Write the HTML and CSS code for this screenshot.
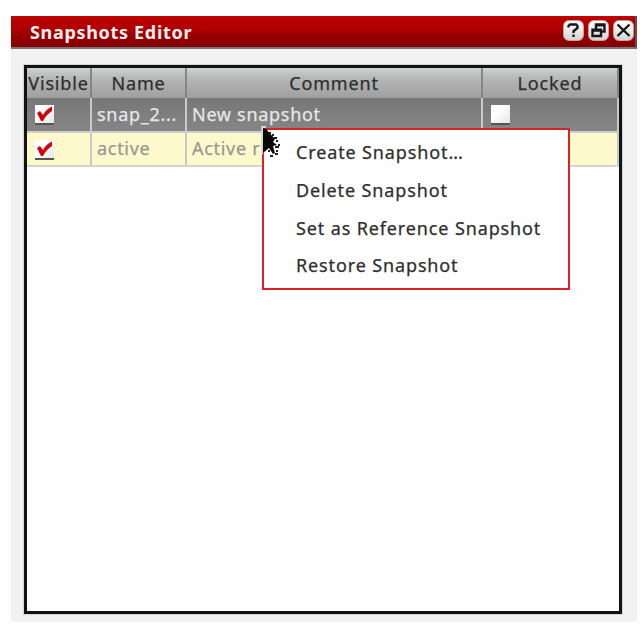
FILE: index.html
```html
<!DOCTYPE html>
<html lang="en">
<head>
<meta charset="utf-8">
<title>Snapshots Editor</title>
<link rel="stylesheet" href="styles.css">
</head>
<body>
<main class="panel">
  <header class="titlebar">
    <h1 class="title">Snapshots Editor</h1>
    <div class="buttons">
      <button class="tool" aria-label="Help"><svg viewBox="0 0 19 19"><path d="M4.5 6.5V5L6 3.5H12L13.5 5V7L9.5 10.2V12M9.5 13.5V16" /></svg></button>
      <button class="tool" aria-label="Restore"><svg viewBox="0 0 19 19"><path d="M7 8V3.5H15.5V10.5H13M7 4.3H15.5M3.5 8.8H12V15H3.5ZM3.5 9.6H12" /></svg></button>
      <button class="tool" aria-label="Close"><svg viewBox="0 0 19 19"><path d="M3.5 3.5L15.5 15M15.5 3.5L3.5 15" /></svg></button>
    </div>
  </header>
  <section class="frame">
    <div class="row head">
      <div class="cell">Visible</div>
      <div class="cell">Name</div>
      <div class="cell">Comment</div>
      <div class="cell">Locked</div>
    </div>
    <div class="row selected">
      <div class="cell check"><span class="box"><svg viewBox="0 0 18 18"><path d="M2 8L5 6L8 10Q11 4 17 1.5V6Q11 10 8 16H6Z"/></svg></span></div>
      <div class="cell">snap_2...</div>
      <div class="cell">New snapshot</div>
      <div class="cell check"><span class="box"></span></div>
    </div>
    <div class="row active">
      <div class="cell check"><span class="box"><svg viewBox="0 0 18 18"><path d="M2 8L5 6L8 10Q11 4 17 1.5V6Q11 10 8 16H6Z"/></svg></span></div>
      <div class="cell">active</div>
      <div class="cell">Active r</div>
      <div class="cell"></div>
    </div>
  </section>
</main>
<ul class="menu">
  <li>Create Snapshot<span class="dots">...</span></li>
  <li>Delete Snapshot</li>
  <li>Set as Reference Snapshot</li>
  <li>Restore Snapshot</li>
</ul>
<svg class="cursor" viewBox="0 0 22 36">
  <path class="edge" d="M1.2 1V29M1 2H5"/>
  <path d="M2 3L5 4L14 14L12 17L16 20L12 21L14 28L12 29L8 23L2 28Z"/>
  <path class="specks" d="M8 8h2M11 10h2M13 13h3M15 16h2M17 20h2M14 22h4M15 26h2M14 29h3M9 31h3M7 26h2"/>
</svg>
</body>
</html>
```

FILE: styles.css
```css
* { box-sizing: border-box; }
body {
  margin: 0;
  width: 640px;
  height: 640px;
  padding: 16px 3px 0 11px;
  overflow: hidden;
  background: #fefefe;
  font-family: "Noto Sans", sans-serif;
  font-size: 18px;
  letter-spacing: 0.7px;
  color: #2e2e2e;
  -webkit-text-stroke: 0.25px;
}
.panel {
  height: 606px;
  display: flex;
  flex-direction: column;
  background: #f3f2f3;
}
.titlebar {
  flex: none;
  height: 33px;
  display: flex;
  align-items: center;
  justify-content: space-between;
  padding: 0 1px 0 19px;
  background: linear-gradient(#c30606 0, #b60000 4px, #b00000 13px, #980000 19px, #850000 31px);
  border-right: 2px solid #6b4a4a;
  border-bottom: 2px solid #777;
}
.title {
  margin: 0;
  font-size: 18px;
  line-height: 30px;
  font-weight: 700;
  letter-spacing: 0.68px;
  color: #fdeeee;
  -webkit-text-stroke: 0;
}
.buttons { display: flex; gap: 4px; margin-top: -3px; }
.tool {
  width: 21px;
  height: 21px;
  padding: 0;
  border: 1px solid #c9a0a0;
  border-radius: 6px;
  background: linear-gradient(#fff, #d4d4d4);
}
.tool svg { display: block; width: 19px; height: 19px; fill: none; stroke: #171717; stroke-width: 2.4; }
.frame {
  width: 598px;
  height: 549px;
  margin: 16px 0 0 13px;
  border: 3px solid #101412;
  outline: 1px solid #d4d6d4;
  background: #fefefe;
}
.row {
  display: grid;
  grid-template-columns: 65px 95px 296px 1fr;
  width: 592px;
  line-height: 31px;
}
.cell {
  padding-left: 5px;
  border-right: 2px solid #c9c9c9;
  white-space: nowrap;
  overflow: hidden;
}
.head {
  height: 30px;
  letter-spacing: 0.85px;
  background: linear-gradient(#d0d2d1, #bbbcbc 8px, #b0b0b0 50%, #a0a0a0);
}
.head .cell { padding: 0; text-align: center; border-right: 2px solid #858585; }
.selected {
  height: 35px;
  line-height: 32px;
  background: linear-gradient(#777, #868686);
  color: #e3e8ea;
  border-bottom: 2px solid #cecece;
}
.active {
  height: 34px;
  background: #fef8cd;
  color: #999990;
  border-bottom: 2px solid #d5d4cb;
}
.row .check { padding: 7px 0 0 8px; }
.box {
  display: block;
  width: 19px;
  height: 20px;
  background: linear-gradient(135deg, #fff 40%, #e5e5e5);
  border-bottom: 2px solid #555;
}
.box svg { display: block; width: 18px; height: 18px; fill: #d0050c; }
.menu {
  position: absolute;
  left: 262px;
  top: 128px;
  width: 308px;
  height: 162px;
  margin: 0;
  padding: 4px 0 0 32px;
  list-style: none;
  line-height: 37.8px;
  letter-spacing: 0.87px;
  white-space: nowrap;
  background: #fefefe;
  border: 2px solid #d52228;
}
.dots { letter-spacing: 0; }
.cursor { position: absolute; left: 261px; top: 125px; width: 22px; height: 36px; fill: #080808; }
.cursor .edge { stroke: #d8d8d8; stroke-width: 2; fill: none; }
.cursor .specks { stroke: #222; stroke-width: 1.8; }
```
